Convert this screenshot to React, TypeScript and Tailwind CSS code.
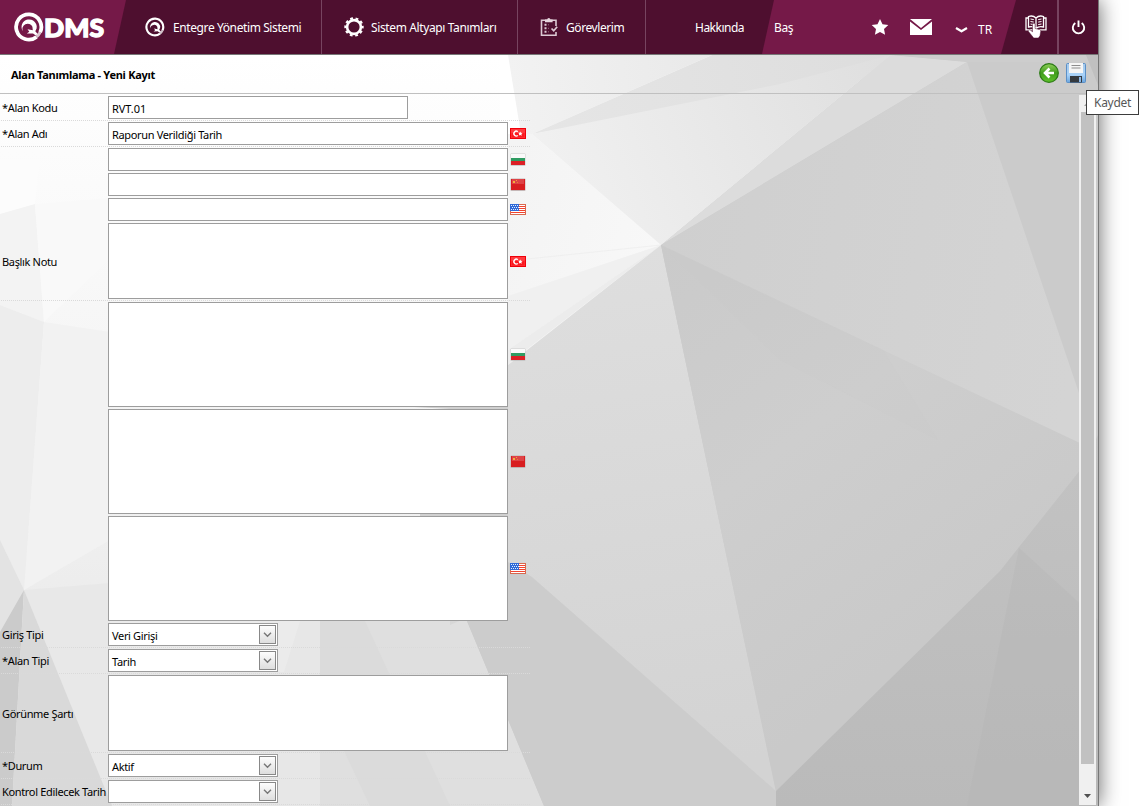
import type { ReactNode } from 'react';

type FlagCode = 'tr' | 'bg' | 'cn' | 'us';

function Flag({ code }: { code: FlagCode }) {
  if (code === 'tr') {
    return (
      <svg width="16" height="11" viewBox="0 0 16 11" className="block">
        <rect width="16" height="11" fill="#f0000a" />
        <rect x="1" y="1" width="14" height="9" fill="#ff3a3e" />
        <rect x="1.500" y="5" width="13" height="4.500" fill="#fb1a20" />
        <path d="M7.800 3.700A2.400 2.400 0 1 0 7.800 7.500" fill="none" stroke="#fff" strokeWidth="1.400" />
        <path d="M10.200 3.400l.7 1.300 1.700.2-1.200 1.100.4 1.700-1.500-.8-1.500.7.4-1.600-1-1.200h1.400z" fill="#fff" />
      </svg>
    );
  }
  if (code === 'bg') {
    return (
      <svg width="16" height="13" viewBox="0 0 16 13" className="block">
        <rect x=".5" y=".5" width="15" height="12.500" rx="1" fill="#bdbdbd" opacity=".7" />
        <rect x="1" y="1" width="14" height="4.500" fill="#fafafa" />
        <rect x="1" y="5" width="14" height="4" fill="#2f9c62" />
        <rect x="1" y="8" width="14" height="4" fill="#dc1f25" />
      </svg>
    );
  }
  if (code === 'cn') {
    return (
      <svg width="16" height="13" viewBox="0 0 16 13" className="block">
        <rect x=".5" y=".5" width="15" height="12.500" rx="1" fill="#b9a8a8" opacity=".8" />
        <rect x="1" y="1" width="14" height="11" fill="#d81e20" />
        <rect x="2" y="1" width="12" height="5" fill="#de4346" />
        <rect x="3" y="3" width="2" height="2" fill="#f3b03a" />
        <rect x="6" y="2" width="1" height="1" fill="#f3a03a" />
        <rect x="7" y="4" width="1" height="1" fill="#e88433" />
      </svg>
    );
  }
  return (
    <svg width="16" height="11" viewBox="0 0 16 11" className="block">
      <rect width="16" height="11" fill="#d9684e" />
      <rect x="1" y="1" width="14" height="9" fill="#fff" />
      {[2, 4, 6, 8].map((y) => (
        <rect key={y} x="1" y={y} width="14" height="1" fill="#f2432f" />
      ))}
      <rect width="9" height="7" fill="#2f6ad8" />
      {[1, 3, 5].map((y) => (
        <path
          key={y}
          d={`M${y === 3 ? 2 : 1} ${y + 0.5}h7`}
          stroke="#e6eefc"
          strokeDasharray="1 1"
        />
      ))}
    </svg>
  );
}

function Backdrop() {
  return (
    <svg
      className="absolute left-0 top-0"
      width="1098"
      height="751"
      viewBox="0 55 1098 751"
      preserveAspectRatio="none"
    >
      <defs>
        <linearGradient id="left" x1="0" y1="0" x2="0" y2="1">
          <stop offset="0" stopColor="#ffffff" />
          <stop offset=".3" stopColor="#f8f8f8" />
          <stop offset=".6" stopColor="#f0f0f0" />
          <stop offset="1" stopColor="#e4e4e4" />
        </linearGradient>
        <linearGradient id="crest" gradientUnits="userSpaceOnUse" x1="510" y1="80" x2="712" y2="55">
          <stop offset="0" stopColor="#f2f2f2" />
          <stop offset="1" stopColor="#e9e9e9" />
        </linearGradient>
        <linearGradient id="top" gradientUnits="userSpaceOnUse" x1="532" y1="134" x2="890" y2="55">
          <stop offset="0" stopColor="#e6e6e6" />
          <stop offset="1" stopColor="#dddddd" />
        </linearGradient>
        <linearGradient id="fan" gradientUnits="userSpaceOnUse" x1="550" y1="200" x2="880" y2="60">
          <stop offset="0" stopColor="#f1f1f1" />
          <stop offset="1" stopColor="#dfdfdf" />
        </linearGradient>
        <linearGradient id="glow" gradientUnits="userSpaceOnUse" x1="508" y1="200" x2="661" y2="245">
          <stop offset="0" stopColor="#f4f4f4" />
          <stop offset="1" stopColor="#f8f8f8" />
        </linearGradient>
        <linearGradient id="mid" gradientUnits="userSpaceOnUse" x1="661" y1="245" x2="740" y2="760">
          <stop offset="0" stopColor="#dedede" />
          <stop offset="1" stopColor="#d3d3d3" />
        </linearGradient>
        <linearGradient id="east" gradientUnits="userSpaceOnUse" x1="661" y1="245" x2="1080" y2="320">
          <stop offset="0" stopColor="#cfcfcf" />
          <stop offset="1" stopColor="#d4d4d4" />
        </linearGradient>
        <linearGradient id="core" gradientUnits="userSpaceOnUse" x1="661" y1="245" x2="950" y2="620">
          <stop offset="0" stopColor="#cacaca" />
          <stop offset=".5" stopColor="#cecece" />
          <stop offset="1" stopColor="#c9c9c9" />
        </linearGradient>
        <linearGradient id="south" x1="0" y1="0" x2="0" y2="1">
          <stop offset="0" stopColor="#c3c3c3" />
          <stop offset="1" stopColor="#bababa" />
        </linearGradient>
      </defs>
      <rect y="55" width="1098" height="751" fill="url(#left)" />
      <path d="M0 160L40 160 35 204 0 214z" fill="#fcfcfc" />
      <path d="M0 214L35 204 44 322 0 305z" fill="#f3f3f3" />
      <path d="M35 204L110 198V260L44 322z" fill="#f9f9f9" />
      <path d="M0 305L44 322 24 590 0 540z" fill="#ededed" />
      <path d="M44 322L110 332V540L24 590z" fill="#f2f2f2" />
      <path d="M0 540L24 590 0 640z" fill="#e3e3e3" />
      <path d="M24 590L110 583V806z" fill="#e8e8e8" />
      <path d="M24 590L0 632V806H12z" fill="#cbcbcb" />
      <path d="M24 590L12 806H112z" fill="#d9d9d9" />
      <path d="M110 600H320V806H112z" fill="#e7e7e7" />
      <path d="M320 600H470L544 806H320z" fill="#dfdfdf" />
      <path d="M365 621L450 806H370L320 700V621z" fill="#dbdbdb" />
      <path d="M300 621L284 672H110V621z" fill="#ebebeb" />

      <path d="M661 245L891 55H1098V806H544L467 621z" fill="#cbcbcb" />
      <path d="M508 55L532 134 661 245 508 362z" fill="url(#glow)" />
      <path d="M508 55H712L532 134 519 134z" fill="url(#crest)" />
      <path d="M500 55H508L521 134H500z" fill="#ffffff" />
      <path d="M712 55H891L967 62 532 134z" fill="url(#top)" />
      <path d="M532 134L780 84 891 55 661 245z" fill="url(#fan)" />
      <path d="M891 55L967 62 661 245z" fill="#dcdcdc" />
      <path d="M508 296L661 245 508 350z" fill="#f0f0f0" />
      <path d="M508 350L661 245 526 350 508 365z" fill="#ececec" />
      <path d="M508 261L661 245" stroke="#ededed" strokeWidth=".7" />

      <path d="M508 365L661 245 778 800 508 600 450 625V400z" fill="url(#mid)" />
      <path d="M891 55H1098V62L967 62z" fill="#cdcdcd" />
      <path d="M1086 55H1098V85z" fill="#c0c0c0" />
      <path d="M661 245L967 62 1082 402 1082 475 883 400z" fill="url(#east)" />
      <path d="M661 245L883 350 1082 444V470L1000 572 776 792z" fill="url(#core)" />
      <path d="M661 245L883 350 938 440 780 360z" fill="#cbcbcb" opacity=".3" />
      <path d="M467 621L508 562 532 577 776 791V806H544z" fill="#cccccc" />
      <path d="M1098 435L1081 469 1000 571 776 791V806H1098z" fill="url(#south)" />
      <path d="M1019 548L967 806H1098V620z" fill="#b4b4b4" opacity=".3" />
      <path d="M414 407H508V409H450zM420 514H508V517H420z" fill="#d0d0d0" />
    </svg>
  );
}

function QMark({ size, thin }: { size: number; thin?: boolean }) {
  return (
    <svg width={size} height={size} viewBox="0 0 30 30" fill="none" className="block">
      <path
        d="M26.200 20.200A12.600 12.600 0 1 0 22.500 24.900"
        stroke="#fff"
        strokeWidth={thin ? 3.2 : 3.8}
      />
      <path d="M22.500 24.900A12.600 12.600 0 0 0 26.200 20.200" stroke="#fff" strokeWidth="3" opacity=".75" />
      <path
        d="M8.800 19.200A7.600 7.600 0 1 1 22.600 16.500L21.300 19.200 24 22.300 21.500 23.300 19 21.500 12.800 21.600 15.300 19.800 13.500 17.300 18.800 18.200 18.400 14.800A4.600 4.600 0 0 0 8.800 19.200z"
        fill="#fff"
      />
    </svg>
  );
}

function GearIcon() {
  return (
    <svg width="20" height="20" viewBox="0 0 20 20" className="block">
      <circle cx="10" cy="10" r="6.900" fill="none" stroke="#fff" strokeWidth="2.600" />
      <circle
        cx="10"
        cy="10"
        r="8.600"
        fill="none"
        stroke="#fff"
        strokeWidth="2.200"
        strokeDasharray="2.800 2.604"
        strokeDashoffset="1.400"
      />
    </svg>
  );
}

function TaskIcon() {
  return (
    <svg width="18" height="20" viewBox="0 0 18 20" fill="none" stroke="#dccad4" className="block">
      <path d="M16 9V3.200H1.500V18.200H16V15" strokeWidth="1.600" />
      <path d="M5 2.500h2.200a1.600 1.600 0 0 1 3.200 0h2.200v2.700H5z" fill="#e6d5de" stroke="none" />
      <path d="M4.500 7.800h2M4.500 11.300h2M4.500 14.800h2" strokeWidth="2" />
      <path d="M8 7.800h1M8 11.300h1M8 14.800h1" strokeWidth="1" opacity=".5" />
      <path d="M11.500 11.500l2.200 2.200 3.500-4" strokeWidth="1.700" />
    </svg>
  );
}

function BookIcon() {
  return (
    <svg width="22" height="24" viewBox="0 0 22 24" fill="none" className="block">
      <path
        d="M11 3C9 1 5.500.8 3.500 1.500V12C6 11.300 9 11.500 11 13.500 13 11.500 16 11.300 18.500 12V1.500C16.500.8 13 1 11 3zM11 3V13M3.500 3H1V14.800H9M18.500 3H21V14.800H14"
        stroke="#fff"
        strokeWidth="1.300"
      />
      <path
        d="M5.500 4l3.300.6M5.500 6.500l3.300.6M5.500 9l3.300.6M16.500 4l-3.300.6M16.500 6.500l-3.300.6M16.500 9l-3.300.6"
        stroke="#fff"
      />
      <path
        d="M7.500 9.500c0-1.700 2.600-1.700 2.600 0v4l4.300.9c1.200.4 1.500 1.200 1.300 2.300l-.7 4-1.600 2.300H8.700L6.300 20l-3-3.700c-.6-1.100.8-2 2-1.200l2.200 1.600z"
        fill="#fff"
        stroke="#4e0f2f"
        strokeWidth=".5"
      />
    </svg>
  );
}

function NavItem({ icon, label, className }: { icon: ReactNode; label: string; className: string }) {
  return (
    <div className={`flex h-full shrink-0 items-center border-r border-[#774460] ${className}`}>
      {icon}
      <span className="whitespace-nowrap pt-[2px]">{label}</span>
    </div>
  );
}

function Header() {
  return (
    <header className="relative flex h-[55px] w-[1098px] shrink-0 border-b border-[#777] bg-[#4e0f2f] font-['Noto_Sans'] text-[12px] text-white">
      <div className="flex h-[54px] w-[126px] shrink-0 items-center bg-[#751948] pl-[14px] [clip-path:polygon(0_0,100%_0,114px_100%,0_100%)]">
        <QMark size={30} />
        <svg width="61" height="30" viewBox="0 0 61 30" className="block">
          <text
            x="0"
            y="24.500"
            fill="#fff"
            stroke="#fff"
            strokeWidth="1.300"
            fontFamily="Lato, sans-serif"
            fontWeight="900"
            fontSize="25.500"
            textLength="60"
            lengthAdjust="spacingAndGlyphs"
          >
            DMS
          </text>
        </svg>
      </div>
      <NavItem
        className="w-[196px] gap-[8px] pl-[19px] tracking-[-0.4px]"
        icon={<QMark size={20} thin />}
        label="Entegre Yönetim Sistemi"
      />
      <NavItem
        className="w-[196px] gap-[7px] pl-[22px] tracking-[-0.38px]"
        icon={<GearIcon />}
        label="Sistem Altyapı Tanımları"
      />
      <NavItem
        className="w-[128px] gap-[8px] pl-[22px] tracking-[-0.42px]"
        icon={<TaskIcon />}
        label="Görevlerim"
      />
      <div className="flex w-[116px] shrink-0 items-center pl-[49px] pt-[2px] tracking-[-0.5px]">Hakkında</div>
      <div className="flex h-[54px] w-[254px] shrink-0 items-center bg-[#751948] pl-[12px] tracking-[-0.4px] [clip-path:polygon(12px_0,100%_0,239px_100%,0_100%)]">
        <span className="w-[97px] pt-[2px]">Baş</span>
        <svg width="18" height="17" viewBox="0 0 18 17" className="block">
          <path
            d="M9 0l2.500 5.300 5.800.7-4.300 4 1.100 5.800L9 13l-5.100 2.800L5 10 .7 6l5.800-.7z"
            fill="#fff"
          />
        </svg>
        <svg width="22" height="16" viewBox="0 0 22 16" className="ml-[21px] block">
          <path d="M0 0h22L11 9zM0 2.500l11 8.500 11-8.500V16H0z" fill="#fff" />
        </svg>
        <svg width="13" height="6" viewBox="0 0 13 6" className="ml-[23px] mt-[6px] block">
          <path d="M1 1L6.500 4.300 12 1" fill="none" stroke="#fff" strokeWidth="2.200" strokeLinejoin="round" />
        </svg>
        <span className="ml-[10px] mt-[6px] tracking-normal">TR</span>
      </div>
      <div className="flex h-full w-[43px] shrink-0 items-center border-r-2 border-[#774460] pl-[9px]">
        <BookIcon />
      </div>
      <div className="flex h-full grow items-center pl-[12px]">
        <svg width="15" height="15" viewBox="0 0 15 15" fill="none" stroke="#fff" strokeWidth="1.900" className="block">
          <path d="M4.300 3A5.700 5.700 0 1 0 10.700 3M7.500.5V7" />
        </svg>
      </div>
    </header>
  );
}

function BackIcon() {
  return (
    <svg width="20" height="20" viewBox="0 0 20 20" className="block">
      <defs>
        <linearGradient id="ball" x1="0" y1="0" x2="0" y2="1">
          <stop offset="0" stopColor="#8fcf58" />
          <stop offset=".5" stopColor="#3f9c1c" />
          <stop offset="1" stopColor="#5fc22c" />
        </linearGradient>
      </defs>
      <circle cx="10" cy="10" r="9.300" fill="url(#ball)" stroke="#2b7a14" strokeWidth="1.200" />
      <path d="M15 10H6.500M10.500 5.500L6 10 10.500 14.500" fill="none" stroke="#fff" strokeWidth="2.600" />
    </svg>
  );
}

function SaveIcon() {
  return (
    <svg width="20" height="20" viewBox="0 0 20 20" className="block">
      <defs>
        <linearGradient id="disk" x1="0" y1="0" x2="0" y2="1">
          <stop offset="0" stopColor="#a4c8ea" />
          <stop offset=".6" stopColor="#a9d2f8" />
          <stop offset="1" stopColor="#6aa4dc" />
        </linearGradient>
      </defs>
      <rect x=".5" y=".5" width="19" height="19" rx="1" fill="url(#disk)" stroke="#5b8fc6" />
      <rect x="3" y="0" width="14" height="10" fill="#f5f5f5" />
      <path d="M5.500 2.500h9M5.500 5h9" stroke="#8d8d8d" />
      <rect x="4" y="13" width="12" height="6.500" fill="#34393e" />
      <rect x="13" y="14" width="2" height="5" fill="#8cb6e4" />
    </svg>
  );
}

function Row({
  label = '',
  line = false,
  flag,
  children,
}: {
  label?: string;
  line?: boolean;
  flag?: FlagCode;
  children: ReactNode;
}) {
  return (
    <div
      className={`ml-px flex w-[529px] shrink-0 items-center py-px ${
        line ? 'border-b border-dotted border-[#dadada]' : ''
      }`}
    >
      <div className="w-[107px] shrink-0 whitespace-nowrap pl-px pt-[2px]">{label}</div>
      {children}
      {flag && (
        <div className="ml-[2px]">
          <Flag code={flag} />
        </div>
      )}
    </div>
  );
}

function Field({ className, value = '' }: { className: string; value?: string }) {
  return (
    <div className={`shrink-0 border border-[#9d9d9d] bg-white pl-[3px] pt-[3px] leading-[17px] ${className}`}>
      {value}
    </div>
  );
}

function Select({ value = '' }: { value?: string }) {
  return (
    <div className="flex h-[23px] w-[170px] shrink-0 justify-between border border-[#9d9d9d] bg-white py-px pl-[3px] pr-px">
      <span className="pt-[2px] leading-[17px]">{value}</span>
      <div className="flex h-[19px] w-[17px] items-center justify-center border border-[#888] bg-linear-to-b from-[#fdfdfd] to-[#dedede]">
        <svg width="9" height="6" viewBox="0 0 9 6" className="block">
          <path d="M1 .8L4.500 4.300 8 .8" fill="none" stroke="#777" strokeWidth="1.400" />
        </svg>
      </div>
    </div>
  );
}

export default function App() {
  return (
    <div className="relative h-[806px] w-[1142px] overflow-hidden bg-white">
      <div className="flex h-[806px] w-[1099px] flex-col border-r border-[#777] shadow-[0_0_20px_rgba(0,0,0,0.6)]">
        <Header />
        <main className="relative flex w-[1098px] grow flex-col font-['Noto_Sans'] text-[11px] tracking-[-0.34px] text-black">
          <Backdrop />
          <div className="relative flex h-[39px] shrink-0 items-center border-b border-[#c0c0c0] pb-[3px] pl-[11px] pr-[12px]">
            <h1 className="grow pt-[6px] text-[11px] font-bold tracking-[-0.28px]">Alan Tanımlama - Yeni Kayıt</h1>
            <div className="flex gap-[7px]">
              <BackIcon />
              <SaveIcon />
            </div>
          </div>
          <div className="relative flex grow justify-between">
            <form className="flex flex-col pt-px">
              <Row label="*Alan Kodu" line>
                <Field className="h-[23px] w-[300px] tracking-[-0.05px]" value="RVT.01" />
              </Row>
              <Row label="*Alan Adı" line flag="tr">
                <Field className="h-[23px] w-[400px]" value="Raporun Verildiği Tarih" />
              </Row>
              <Row flag="bg">
                <Field className="h-[23px] w-[400px]" />
              </Row>
              <Row flag="cn">
                <Field className="h-[23px] w-[400px]" />
              </Row>
              <Row flag="us">
                <Field className="h-[23px] w-[400px]" />
              </Row>
              <Row label="Başlık Notu" line flag="tr">
                <Field className="h-[76px] w-[400px]" />
              </Row>
              <Row flag="bg">
                <Field className="h-[105px] w-[400px]" />
              </Row>
              <Row flag="cn">
                <Field className="h-[105px] w-[400px]" />
              </Row>
              <Row flag="us">
                <Field className="h-[105px] w-[400px]" />
              </Row>
              <Row label="Giriş Tipi" line>
                <Select value="Veri Girişi" />
              </Row>
              <Row label="*Alan Tipi" line>
                <Select value="Tarih" />
              </Row>
              <Row label="Görünme Şartı" line>
                <Field className="h-[76px] w-[400px]" />
              </Row>
              <Row label="*Durum" line>
                <Select value="Aktif" />
              </Row>
              <Row label="Kontrol Edilecek Tarih" line>
                <Select />
              </Row>
            </form>
            <div className="mr-[2px] mt-px flex h-[710px] w-[17px] flex-col items-center justify-between bg-[#f0f0f0]">
              <svg width="7" height="17" viewBox="0 0 7 17" className="block">
                <path d="M0 11h7L3.500 7z" fill="#a0a0a0" />
              </svg>
              <div className="w-[13px] grow bg-[#c1c1c1]" />
              <svg width="7" height="41" viewBox="0 0 7 41" className="block">
                <path d="M0 30h7L3.500 34z" fill="#505050" />
              </svg>
            </div>
          </div>
        </main>
      </div>
      <div className="absolute left-[1086px] top-[90px] flex h-[25px] w-[53px] items-center justify-center border border-[#3c3c3c] bg-white font-['Noto_Sans'] text-[12px] tracking-[-0.3px] text-[#575757]">
        Kaydet
      </div>
    </div>
  );
}
